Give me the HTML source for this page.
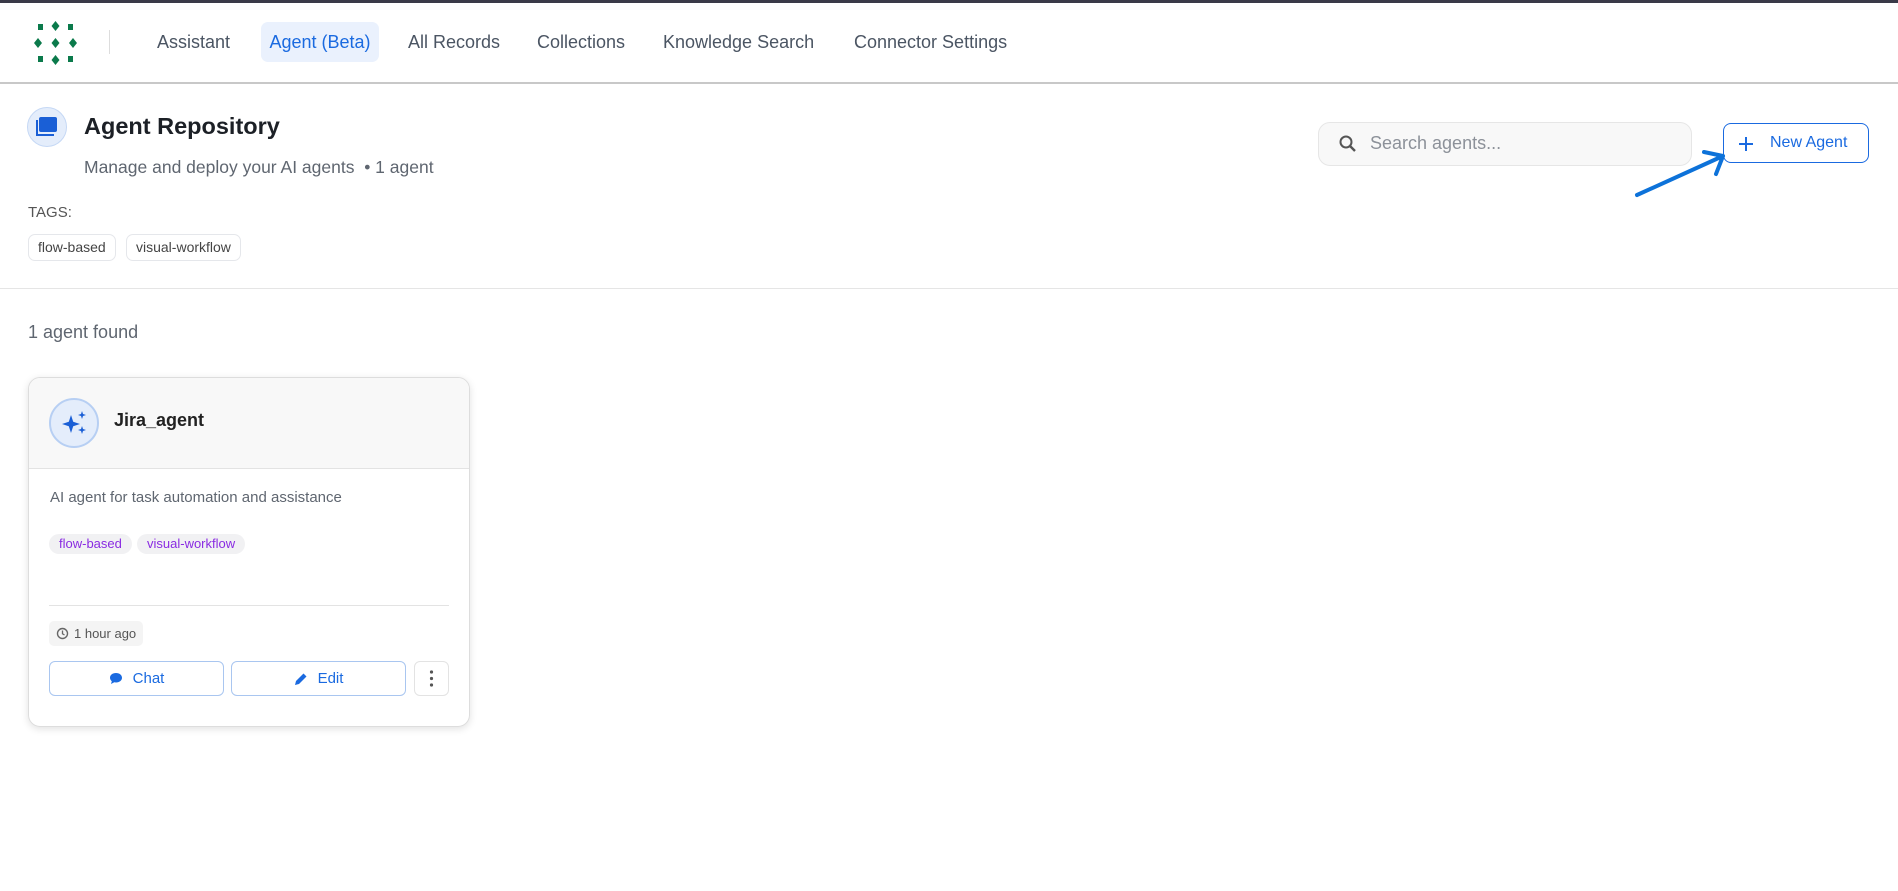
<!DOCTYPE html>
<html><head><meta charset="utf-8"><style>
*{box-sizing:border-box;margin:0;padding:0}
body{width:1898px;height:891px;overflow:hidden;background:#fff;font-family:"Liberation Sans",sans-serif;position:relative;color:#1f2328}
.abs{position:absolute}
.top{left:0;top:0;width:1898px;height:3px;background:#3a3a48}
.hdr{left:0;top:3px;width:1898px;height:81px;border-bottom:2px solid #c8c8c8;background:#fff}
.nav{top:22px;height:40px;line-height:40px;font-size:18px;color:#4b5563;padding:0 8px;border-radius:7px}
.nav.act{background:#eaf1fd;color:#1a6ae0}
.chip{border:1px solid #e5e7eb;border-radius:7px;font-size:14px;color:#444;height:27px;line-height:25px;padding:0 9px}
.ptag{background:#f1f1f3;color:#8a2be2;border-radius:10px;font-size:13px;height:20px;line-height:20px;padding:0 10px}
.btn{border:1px solid #a9c6f0;border-radius:6px;color:#1a6ae0;font-size:15px;display:flex;align-items:center;justify-content:center;gap:10px}
</style></head><body>
<div class="abs top"></div>
<div class="abs hdr"></div>
<svg class="abs" style="left:33px;top:21px" width="46" height="44" viewBox="0 0 46 44">
<g fill="#0b7a4b">
<rect x="5" y="3" width="5" height="6"/><rect x="35" y="3" width="5" height="6"/>
<path d="M22.5 0l4 5-4 5-4-5z"/>
<path d="M5 17l4 5-4 5-4-5z"/><path d="M22.5 17l4 5-4 5-4-5z"/><path d="M40 17l4 5-4 5-4-5z"/>
<rect x="5" y="35" width="5" height="6"/><rect x="35" y="35" width="5" height="6"/>
<path d="M22.5 34l4 5-4 5-4-5z"/></g></svg>
<div class="abs" style="left:109px;top:30px;width:1px;height:24px;background:#ddd"></div>
<div class="abs nav" style="left:149px">Assistant</div>
<div class="abs nav act" style="left:261px;width:118px;text-align:center">Agent (Beta)</div>
<div class="abs nav" style="left:400px">All Records</div>
<div class="abs nav" style="left:529px">Collections</div>
<div class="abs nav" style="left:655px">Knowledge Search</div>
<div class="abs nav" style="left:846px">Connector Settings</div>

<div class="abs" style="left:27px;top:107px;width:40px;height:40px;border-radius:50%;background:#e4edfb;border:1px solid #c5d8f5"></div>
<svg class="abs" style="left:36px;top:117px" width="22" height="20" viewBox="0 0 22 20"><rect x="3" y="0" width="18" height="15" rx="2" fill="#1a5fd6"/><path d="M1 3v15h17" stroke="#1a5fd6" stroke-width="2" fill="none"/></svg>
<div class="abs" style="left:84px;top:113px;font-size:23.5px;font-weight:bold;color:#1c2026">Agent Repository</div>
<div class="abs" style="left:84px;top:157px;font-size:17.5px;color:#5f6670">Manage and deploy your AI agents &nbsp;• 1 agent</div>
<div class="abs" style="left:28px;top:204px;font-size:15px;color:#555">TAGS:</div>
<div class="abs chip" style="left:28px;top:234px">flow-based</div>
<div class="abs chip" style="left:126px;top:234px">visual-workflow</div>

<div class="abs" style="left:1318px;top:122px;width:374px;height:44px;border:1px solid #e6e6e6;border-radius:12px;background:#f8f8f8"></div>
<svg class="abs" style="left:1338px;top:134px" width="20" height="20" viewBox="0 0 20 20"><circle cx="8" cy="8" r="5.5" stroke="#555" stroke-width="2" fill="none"/><path d="M12 12l5 5" stroke="#555" stroke-width="2.4"/></svg>
<div class="abs" style="left:1370px;top:133px;font-size:18px;color:#8c9199">Search agents...</div>
<div class="abs" style="left:1723px;top:123px;width:146px;height:40px;border:1.5px solid #1a6ae0;border-radius:8px"></div>
<svg class="abs" style="left:1738px;top:136px" width="16" height="16"><path d="M8 1v14M1 8h14" stroke="#1a6ae0" stroke-width="2"/></svg>
<div class="abs" style="left:1770px;top:134px;font-size:16px;color:#1a6ae0">New Agent</div>
<svg class="abs" style="left:1630px;top:145px" width="100" height="56"><path d="M7 50L93 11M74 7L93 11L86 29" stroke="#0d72d9" stroke-width="4" fill="none" stroke-linecap="round" stroke-linejoin="round"/></svg>

<div class="abs" style="left:0;top:288px;width:1898px;height:1px;background:#e5e5e5"></div>
<div class="abs" style="left:28px;top:322px;font-size:18px;color:#5f6670">1 agent found</div>

<div class="abs" style="left:28px;top:377px;width:442px;height:350px;border:1px solid #ddd;border-radius:12px;box-shadow:0 2px 8px rgba(0,0,0,.12);overflow:hidden">
 <div style="height:91px;background:#f8f8f8;border-bottom:1px solid #e3e3e3"></div>
</div>
<div class="abs" style="left:49px;top:398px;width:50px;height:50px;border-radius:50%;background:#e4edfb;border:2px solid #b7cff3"></div>
<svg class="abs" style="left:62px;top:411px" width="26" height="24" viewBox="0 0 26 24"><g fill="#1a5fd6"><path d="M9 4l2.2 6.8L18 13l-6.8 2.2L9 22l-2.2-6.8L0 13l6.8-2.2z"/><path d="M20 0l1 3 3 1-3 1-1 3-1-3-3-1 3-1z"/><path d="M20 15l1 3 3 1-3 1-1 3-1-3-3-1 3-1z"/></g></svg>
<div class="abs" style="left:114px;top:410px;font-size:18px;font-weight:bold;color:#222">Jira_agent</div>
<div class="abs" style="left:50px;top:489px;font-size:15px;color:#5f6670">AI agent for task automation and assistance</div>
<div class="abs ptag" style="left:49px;top:534px">flow-based</div>
<div class="abs ptag" style="left:137px;top:534px">visual-workflow</div>
<div class="abs" style="left:49px;top:605px;width:400px;height:1px;background:#e3e3e3"></div>
<div class="abs" style="left:49px;top:621px;width:94px;height:25px;background:#f4f4f4;border-radius:5px;font-size:13px;color:#555;line-height:25px;padding-left:25px">1 hour ago</div>
<svg class="abs" style="left:56px;top:627px" width="13" height="13"><circle cx="6.5" cy="6.5" r="5" stroke="#666" stroke-width="1.4" fill="none"/><path d="M6.5 3.5v3.3l2 1.2" stroke="#666" stroke-width="1.3" fill="none"/></svg>
<div class="abs btn" style="left:49px;top:661px;width:175px;height:35px"><svg width="14" height="13"><path d="M7 1C3.5 1 1 3 1 5.8c0 1.4.7 2.6 1.8 3.4L2 12l3.3-1.7c.5.1 1.1.2 1.7.2 3.5 0 6-2 6-4.7S10.5 1 7 1z" fill="#1a6ae0"/></svg>Chat</div>
<div class="abs btn" style="left:231px;top:661px;width:175px;height:35px"><svg width="14" height="14"><path d="M1 13l1-4 7.5-7.5 3 3L5 12z" fill="#1a6ae0"/></svg>Edit</div>
<div class="abs" style="left:414px;top:661px;width:35px;height:35px;border:1px solid #e3e3e3;border-radius:6px"></div>
<svg class="abs" style="left:429px;top:669px" width="5" height="19"><g fill="#555"><circle cx="2.5" cy="3" r="1.6"/><circle cx="2.5" cy="9.5" r="1.6"/><circle cx="2.5" cy="16" r="1.6"/></g></svg>
</body></html>
